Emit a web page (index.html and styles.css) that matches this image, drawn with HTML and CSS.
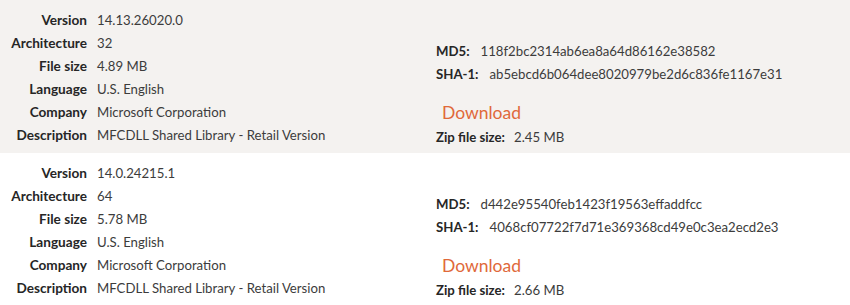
FILE: index.html
```html
<!DOCTYPE html>
<html lang="en">
<head>
<meta charset="utf-8">
<title>MFCDLL versions</title>
<link rel="stylesheet" href="styles.css">
</head>
<body>
<div class="list">
  <section class="entry entry-alt">
    <dl class="info">
      <dt>Version</dt><dd>14.13.26020.0</dd>
      <dt>Architecture</dt><dd>32</dd>
      <dt>File size</dt><dd>4.89 MB</dd>
      <dt>Language</dt><dd>U.S. English</dd>
      <dt>Company</dt><dd>Microsoft Corporation</dd>
      <dt>Description</dt><dd>MFCDLL Shared Library - Retail Version</dd>
    </dl>
    <div class="files">
      <div class="hash"><b>MD5:</b><span class="hv">118f2bc2314ab6ea8a64d86162e38582</span></div>
      <div class="hash"><b>SHA-1:</b><span class="hv">ab5ebcd6b064dee8020979be2d6c836fe1167e31</span></div>
      <a class="download" href="#">Download</a>
      <div class="zip"><b>Zip file size:</b><span class="zv">2.45 MB</span></div>
    </div>
  </section>
  <section class="entry">
    <dl class="info">
      <dt>Version</dt><dd>14.0.24215.1</dd>
      <dt>Architecture</dt><dd>64</dd>
      <dt>File size</dt><dd>5.78 MB</dd>
      <dt>Language</dt><dd>U.S. English</dd>
      <dt>Company</dt><dd>Microsoft Corporation</dd>
      <dt>Description</dt><dd>MFCDLL Shared Library - Retail Version</dd>
    </dl>
    <div class="files">
      <div class="hash"><b>MD5:</b><span class="hv">d442e95540feb1423f19563effaddfcc</span></div>
      <div class="hash"><b>SHA-1:</b><span class="hv">4068cf07722f7d71e369368cd49e0c3ea2ecd2e3</span></div>
      <a class="download" href="#">Download</a>
      <div class="zip"><b>Zip file size:</b><span class="zv">2.66 MB</span></div>
    </div>
  </section>
</div>
</body>
</html>
```

FILE: styles.css
```css
html, body {
  margin: 0;
  padding: 0;
  background: #ffffff;
}
body {
  font-family: Lato, "Liberation Sans", sans-serif;
  font-size: 13.2px;
  color: #3c3c3c;
}
.entry {
  display: flex;
  align-items: flex-start;
  padding: 9px 0 4px;
}
.entry-alt {
  background: #f4f2f0;
}
.info {
  margin: 0;
  padding-left: 8px;
  display: grid;
  grid-template-columns: 79px auto;
  column-gap: 10px;
  line-height: 23px;
  width: 428px;
}
.info dt {
  text-align: right;
  font-weight: bold;
  font-size: 13.6px;
  color: #262626;
  white-space: nowrap;
}
.info dd {
  margin: 0;
  white-space: nowrap;
}
.files {
  margin-top: 31px;
  display: flex;
  flex-direction: column;
  line-height: 23px;
}
.files b {
  color: #262626;
}
.hv {
  margin-left: 11px;
}
.zv {
  margin-left: 9px;
}
.download {
  margin-top: 15px;
  margin-left: 6px;
  font-size: 17.5px;
  line-height: 24px;
  color: #e0693a;
  text-decoration: none;
}
.zip {
  margin-top: 1px;
}
```
